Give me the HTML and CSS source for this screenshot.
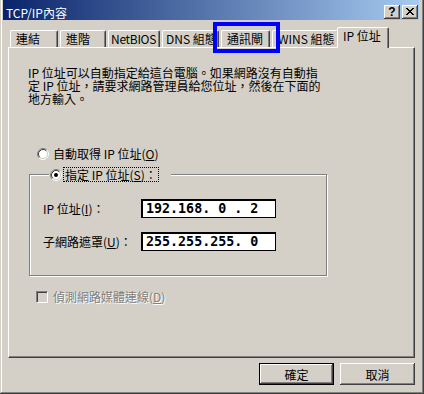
FILE: index.html
```html
<!DOCTYPE html>
<html lang="zh-Hant">
<head>
<meta charset="utf-8">
<title>TCP/IP內容</title>
<link rel="stylesheet" href="styles.css">
</head>
<body>
<div class="window">
  <div class="titlebar">
    <span class="title">TCP/IP內容</span>
    <div class="caption-buttons">
      <span class="cap-btn help">?</span>
      <span class="cap-btn close">
        <svg width="8" height="7" viewBox="0 0 8 7" shape-rendering="crispEdges"><path fill="#000" d="M0 0h2v1h-2z M6 0h2v1h-2z M1 1h2v1h-2z M5 1h2v1h-2z M2 2h4v1h-4z M3 3h2v1h-2z M2 4h4v1h-4z M1 5h2v1h-2z M5 5h2v1h-2z M0 6h2v1h-2z M6 6h2v1h-2z"/></svg>
      </span>
    </div>
  </div>
  <div class="dialog">
    <div class="tabs">
      <div class="tab t1">連結</div>
      <div class="tab t2">進階</div>
      <div class="tab t3">NetBIOS</div>
      <div class="tab t4">DNS 組態</div>
      <div class="tab t5">通訊閘</div>
      <div class="tab t6">WINS 組態</div>
      <div class="tab t7 selected">IP 位址</div>
    </div>
    <div class="panel">
      <p class="desc">IP 位址可以自動指定給這台電腦。如果網路沒有自動指<br>定 IP 位址，請要求網路管理員給您位址，然後在下面的<br>地方輸入。</p>
      <div class="option option-auto">
        <svg class="radio" width="12" height="12" viewBox="0 0 12 12">
          <circle cx="6" cy="6" r="4.5" fill="#fff"/>
          <path d="M2.11 9.89A5.5 5.5 0 0 1 9.89 2.11" fill="none" stroke="#808080"/>
          <path d="M9.89 2.11A5.5 5.5 0 0 1 2.11 9.89" fill="none" stroke="#fff"/>
          <path d="M2.82 9.18A4.5 4.5 0 0 1 9.18 2.82" fill="none" stroke="#404040"/>
          <path d="M9.18 2.82A4.5 4.5 0 0 1 2.82 9.18" fill="none" stroke="#d4d0c8"/>
        </svg>
        <span>自動取得 IP 位址(<u>O</u>)</span>
      </div>
      <fieldset class="group">
        <legend class="option legend">
          <svg class="radio" width="12" height="12" viewBox="0 0 12 12">
            <circle cx="6" cy="6" r="4.5" fill="#fff"/>
            <path d="M2.11 9.89A5.5 5.5 0 0 1 9.89 2.11" fill="none" stroke="#808080"/>
            <path d="M9.89 2.11A5.5 5.5 0 0 1 2.11 9.89" fill="none" stroke="#fff"/>
            <path d="M2.82 9.18A4.5 4.5 0 0 1 9.18 2.82" fill="none" stroke="#404040"/>
            <path d="M9.18 2.82A4.5 4.5 0 0 1 2.82 9.18" fill="none" stroke="#d4d0c8"/>
            <circle cx="6" cy="6" r="2" fill="#000"/>
          </svg>
          <span class="focus">指定 IP 位址(<u>S</u>)：</span>
        </legend>
        <div class="field field-first">
          <span class="field-label">IP 位址(<u>I</u>)：</span>
          <div class="ip">192.168. 0 . 2</div>
        </div>
        <div class="field">
          <span class="field-label">子網路遮罩(<u>U</u>)：</span>
          <div class="ip">255.255.255. 0</div>
        </div>
      </fieldset>
      <div class="option option-check disabled">
        <span class="checkbox"></span>
        <span class="check-text">偵測網路媒體連線(<u>D</u>)</span>
      </div>
    </div>
    <div class="buttons">
      <button class="btn btn-default" type="button">確定</button>
      <button class="btn" type="button">取消</button>
    </div>
  </div>
  <div class="highlight"></div>
</div>
</body>
</html>
```
FILE: styles.css
```css
* { box-sizing: border-box; }
html, body { margin: 0; padding: 0; }
body {
  width: 424px;
  height: 394px;
  overflow: hidden;
  background: #d4d0c8;
  font-family: "Noto Sans CJK TC", "Noto Sans", sans-serif;
  font-size: 12px;
  color: #000;
}
.window {
  position: relative;
  width: 424px;
  height: 394px;
  background: #d4d0c8;
  padding: 0 5px 4px 3px;
  box-shadow: inset -1px -1px 0 #404040, inset 1px 0 0 #d4d0c8, inset -2px -2px 0 #808080, inset 2px 0 0 #fff;
  display: flex;
  flex-direction: column;
}
.titlebar {
  height: 20px;
  padding: 4px 1px 0 3px;
  display: flex;
  align-items: center;
  justify-content: space-between;
  background: linear-gradient(to right, #0a246a, #a6caf0);
  color: #fff;
}
.title { line-height: 13px; white-space: nowrap; }
.caption-buttons { display: flex; gap: 2px; }
.cap-btn {
  width: 16px;
  height: 14px;
  display: flex;
  align-items: center;
  justify-content: center;
  background: #d4d0c8;
  color: #000;
  box-shadow: inset -1px -1px 0 #404040, inset 1px 1px 0 #fff, inset -2px -2px 0 #808080;
}
.help {
  font-family: "Liberation Sans", Arial, sans-serif;
  font-weight: bold;
  font-size: 12px;
  line-height: 12px;
  padding-bottom: 1px;
}
.close svg { display: block; margin: 0 1px 1px 0; }

.dialog {
  flex: 1;
  padding: 7px 4px 5px 5px;
  display: flex;
  flex-direction: column;
}
.tabs {
  height: 20px;
  display: flex;
  align-items: flex-end;
}
.tab {
  height: 17px;
  margin-left: 2px;
  padding: 0 0 0 5px;
  border: 1px solid #fff;
  border-bottom: none;
  border-right-color: #404040;
  border-radius: 2px 2px 0 0;
  box-shadow: inset -1px 0 0 #808080;
  line-height: 16px;
  white-space: nowrap;
  overflow: hidden;
  background: #d4d0c8;
}
.t1 { width: 48px; }
.t2 { width: 46px; }
.t3 { width: 52px; padding-left: 2px; letter-spacing: -0.3px; }
.t4 { width: 57px; padding-left: 3px; }
.t5 { width: 49px; }
.t6 { width: 67px; }
.tab.selected {
  position: relative;
  z-index: 1;
  width: 52px;
  height: 21px;
  margin-left: -2px;
  margin-bottom: -1px;
  padding-top: 1px;
  line-height: 14px;
}
.panel {
  height: 311px;
  border: 1px solid;
  border-color: #fff #404040 #404040 #fff;
  box-shadow: inset -1px -1px 0 #808080;
}
.desc {
  margin: 18px 0 0 19px;
  line-height: 13px;
  white-space: nowrap;
}
.option {
  display: flex;
  align-items: center;
  height: 13px;
  line-height: 13px;
  white-space: nowrap;
}
.radio { display: block; flex: none; }
.option-auto { margin: 42px 0 0 28px; gap: 4px; }

.group {
  margin: 7px 0 0 20px;
  width: 298px;
  min-width: 0;
  padding: 0 0 24px 13px;
  border: 1px solid #808080;
  box-shadow: inset 1px 1px 0 #fff, 1px 1px 0 #fff;
}
.legend {
  margin-left: 6px;
  padding: 0 13px 0 1px;
  height: 15px;
  gap: 2px;
  background: #d4d0c8;
}
.focus {
  padding: 0 1px;
  line-height: 13px;
  outline: 1px dotted #000;
}
.field {
  display: flex;
  align-items: center;
  height: 19px;
  margin-top: 14px;
  white-space: nowrap;
}
.field-first { margin-top: 17px; }
.field-label { width: 98px; flex: none; line-height: 13px; }
.ip {
  width: 135px;
  height: 19px;
  flex: none;
  background: #fff;
  border: solid #000;
  border-width: 2px 1px 1px 2px;
  padding-left: 3px;
  font-family: "DejaVu Sans Mono", monospace;
  font-weight: bold;
  font-size: 13.33px;
  line-height: 16px;
  white-space: pre;
}
.option-check { margin: 14px 0 0 27px; gap: 5px; }
.checkbox {
  width: 12px;
  height: 12px;
  flex: none;
  border: 1px solid;
  border-color: #808080 #fff #fff #808080;
  box-shadow: inset 1px 1px 0 #404040, inset -1px -1px 0 #d4d0c8;
  background: #d4d0c8;
}
.disabled .check-text {
  color: #808080;
  text-shadow: 1px 1px 0 #fff;
}

.buttons {
  display: flex;
  justify-content: flex-end;
  gap: 6px;
  margin-top: 5px;
}
.btn {
  width: 75px;
  height: 22px;
  padding: 0;
  margin: 0;
  border: none;
  background: #d4d0c8;
  color: #000;
  font-family: "Noto Sans CJK TC", "Noto Sans", sans-serif;
  font-size: 12px;
  line-height: 13px;
  box-shadow: inset -1px -1px 0 #404040, inset 1px 1px 0 #fff, inset -2px -2px 0 #808080;
}
.btn-default {
  border: 1px solid #000;
}
.highlight {
  position: absolute;
  left: 213px;
  top: 22px;
  width: 67px;
  height: 31px;
  border: 4px solid #0000ff;
}
```
